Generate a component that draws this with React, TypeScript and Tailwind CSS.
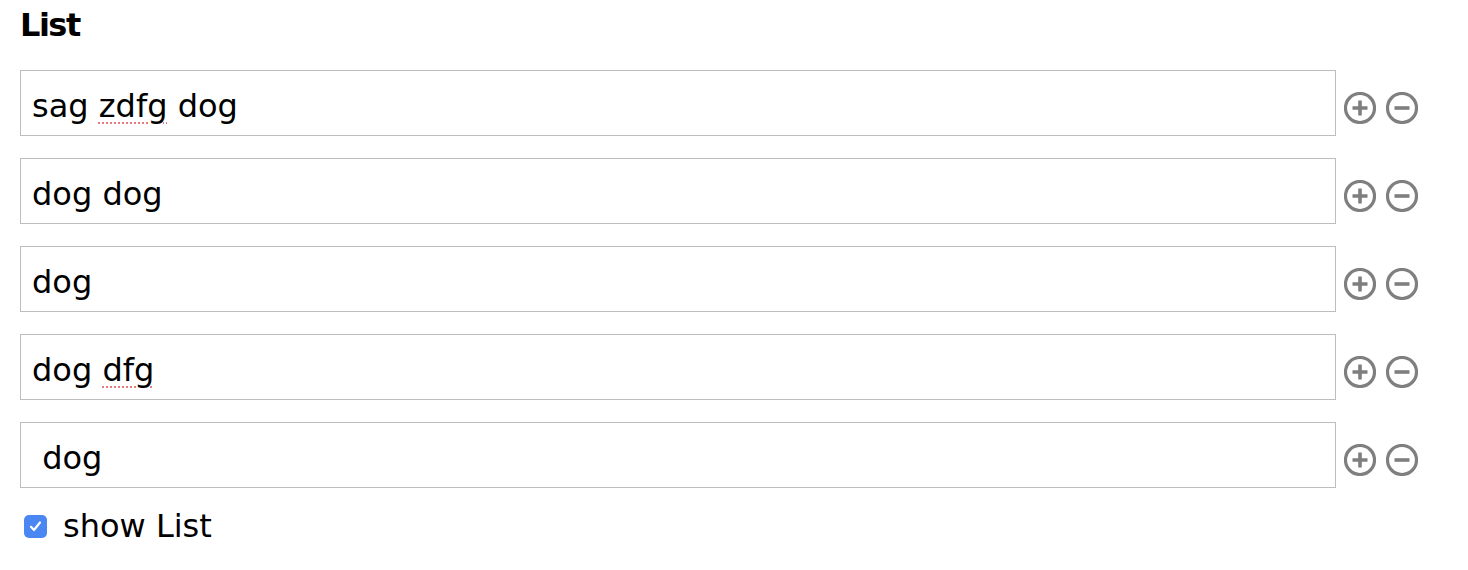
import React from "react";

type Row = { parts: { text: string; typo?: boolean }[] };

const rows: Row[] = [
  { parts: [{ text: "sag " }, { text: "zdfg", typo: true }, { text: " dog" }] },
  { parts: [{ text: "dog dog" }] },
  { parts: [{ text: "dog" }] },
  { parts: [{ text: "dog " }, { text: "dfg", typo: true }] },
  { parts: [{ text: "\u00a0dog" }] },
];

function PlusIcon() {
  return (
    <svg width="32" height="32" viewBox="0 0 32 32" fill="none">
      <circle cx="16" cy="16" r="14.5" stroke="#7f7f7f" strokeWidth="3.2" />
      <path d="M16 8.5v15M8.5 16h15" stroke="#7f7f7f" strokeWidth="3.6" />
    </svg>
  );
}

function MinusIcon() {
  return (
    <svg width="32" height="32" viewBox="0 0 32 32" fill="none">
      <circle cx="16" cy="16" r="14.5" stroke="#7f7f7f" strokeWidth="3.2" />
      <path d="M8.5 16h15" stroke="#7f7f7f" strokeWidth="3.6" />
    </svg>
  );
}

export default function App() {
  return (
    <div
      className="min-h-[570px] bg-white pl-[20px] pt-[7px] text-black"
      style={{ fontFamily: '"DejaVu Sans", "Open Sans", sans-serif' }}
    >
      <h2 className="text-[32px] leading-[37px] font-bold tracking-[-1.5px]">List</h2>

      <div className="mt-[26px] flex flex-col gap-[22px]">
        {rows.map((row, i) => (
          <div key={i} className="flex items-start">
            {/* field */}
            <div className="w-[1316px] h-[66px] border border-[#bdbdbd] bg-white pl-[11px] pt-[17px] text-[32px] leading-[37px] whitespace-pre">
              {row.parts.map((p, j) =>
                p.typo ? (
                  <span
                    key={j}
                    className="underline decoration-dotted decoration-[#ec7a7a] decoration-[2px] underline-offset-[5px]"
                  >
                    {p.text}
                  </span>
                ) : (
                  <span key={j}>{p.text}</span>
                )
              )}
            </div>
            <div className="ml-[8px] mt-[22px] flex gap-[10px]">
              <PlusIcon />
              <MinusIcon />
            </div>
          </div>
        ))}
      </div>

      <label className="mt-[20px] flex items-center">
        <span className="ml-[4px] flex h-[23px] w-[23px] items-center justify-center rounded-[5px] bg-[#4b87f2]">
          <svg width="15" height="15" viewBox="0 0 15 15" fill="none">
            <path d="M3 7.8l3 3.2L12 3.5" stroke="white" strokeWidth="2.2" strokeLinecap="round" strokeLinejoin="round" />
          </svg>
        </span>
        <span className="ml-[16px] text-[32px] leading-[37px]">show List</span>
      </label>
    </div>
  );
}
